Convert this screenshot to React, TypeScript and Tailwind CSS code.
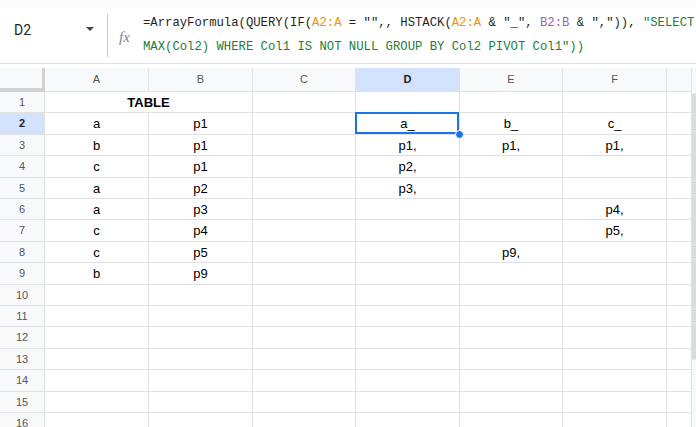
import React from "react";

const colW = ["w-[104px]", "w-[104px]", "w-[103px]", "w-[104px]", "w-[103px]", "w-[104px]", "w-[25px]"];
const rowH = [
  "h-[21px]", "h-[22px]", "h-[21px]", "h-[22px]", "h-[21px]", "h-[21px]", "h-[22px]", "h-[21px]",
  "h-[22px]", "h-[21px]", "h-[21px]", "h-[22px]", "h-[21px]", "h-[22px]", "h-[21px]", "h-[22px]",
];

const data: Record<number, string[]> = {
  2: ["a", "p1", "", "a_", "b_", "c_", ""],
  3: ["b", "p1", "", "p1,", "p1,", "p1,", ""],
  4: ["c", "p1", "", "p2,", "", "", ""],
  5: ["a", "p2", "", "p3,", "", "", ""],
  6: ["a", "p3", "", "", "", "p4,", ""],
  7: ["c", "p4", "", "", "", "p5,", ""],
  8: ["c", "p5", "", "", "p9,", "", ""],
  9: ["b", "p9", "", "", "", "", ""],
};

const letters = ["A", "B", "C", "D", "E", "F", ""];

function Formula() {
  return (
    <div className="text-[12.25px] leading-[24px] text-[#1f1f1f] whitespace-pre" style={{ fontFamily: '"Liberation Mono", "DejaVu Sans Mono", monospace' }}>
      <div>
        {"=ArrayFormula(QUERY(IF("}
        <span className="text-[#f09300]">A2:A</span>
        {' = "",, HSTACK('}
        <span className="text-[#f09300]">A2:A</span>
        {' & "_", '}
        <span className="text-[#a15bcc]">B2:B</span>
        {' & ",")), '}
        <span className="text-[#188038]">"SELECT</span>
      </div>
      <div className="text-[#188038]">{'MAX(Col2) WHERE Col1 IS NOT NULL GROUP BY Col2 PIVOT Col1"))'}</div>
    </div>
  );
}

export default function App() {
  return (
    <div className="w-[696px] h-[427px] overflow-hidden bg-white" style={{ fontFamily: '"Liberation Sans", Arial, sans-serif' }}>
      <div className="h-[8px] bg-[#f9fbfd]" />
      <div className="h-[56px] flex border-b border-[#e3e3e3]">
        <div className="w-[108px] flex items-start justify-between pt-[8px] pl-[14px] pr-[13px] border-r border-[#c4c7c5] my-[6px]">
          <span className="text-[14px] leading-[16px] text-[#1f1f1f]" style={{ fontFamily: "Roboto, sans-serif" }}>D2</span>
          <svg width="8" height="4" viewBox="0 0 8 4" className="mt-[5px]"><path d="M0 0h8L4 4z" fill="#444746" /></svg>
        </div>
        <div className="w-[35px] flex items-center justify-start pl-[11px] pt-[4px]">
          <span className="text-[15px] italic text-[#80868b]" style={{ fontFamily: '"Liberation Serif", serif' }}>fx</span>
        </div>
        <div className="pt-[3px]">
          <Formula />
        </div>
      </div>
      <div className="h-[4px]" />
      <div className="flex h-[24px]">
        <div className="w-[45px] bg-[#f8f9fa] border-r-[3px] border-b-[4px] border-[#d2d2d2]" />
        {letters.map((l, i) => (
          <div
            key={i}
            className={`${colW[i]} flex items-center justify-center border-r border-b border-[#e1e1e1] text-[11px] ${
              l === "D" ? "bg-[#d3e3fd] font-bold text-[#1f1f1f]" : "bg-[#f8f9fa] text-[#575757]"
            }`}
          >
            {l}
          </div>
        ))}
        <div className="w-[4px] bg-[#f8f9fa]" />
      </div>
      <div className="flex">
        <div className="flex flex-col">
          {rowH.map((h, r) => {
            const n = r + 1;
            const sel = n === 2;
            return (
              <div key={n} className={`flex ${h}`}>
                <div
                  className={`w-[45px] flex items-center justify-center border-r border-b border-[#e1e1e1] text-[11px] ${
                    sel ? "bg-[#d3e3fd] font-bold text-[#1f1f1f]" : "bg-[#f8f9fa] text-[#575757]"
                  }`}
                >
                  {n}
                </div>
                {n === 1 ? (
                  <>
                    <div className="w-[208px] flex items-center justify-center pt-[2px] border-r border-b border-[#e1e1e1] text-[13px] font-bold text-black">
                      TABLE
                    </div>
                    {[2, 3, 4, 5, 6].map((c) => (
                      <div key={c} className={`${colW[c]} border-r border-b border-[#e1e1e1]`} />
                    ))}
                  </>
                ) : (
                  colW.map((w, c) => {
                    const v = data[n]?.[c] ?? "";
                    const active = n === 2 && c === 3;
                    return (
                      <div
                        key={c}
                        className={`${w} relative flex items-center justify-center pt-[1px] border-r border-b border-[#e1e1e1] text-[13px] text-black`}
                      >
                        {v}
                        {active && (
                          <>
                            <div className="absolute -left-[1px] -top-[1px] right-0 bottom-0 border-2 border-[#1a73e8]" />
                            <div className="absolute -right-[5px] -bottom-[5px] w-[9px] h-[9px] rounded-full bg-[#1a73e8] border border-white z-10" />
                          </>
                        )}
                      </div>
                    );
                  })
                )}
              </div>
            );
          })}
        </div>
        <div className="w-[4px] relative bg-[#f8f9fa]">
          <div className="absolute left-0 top-[1px] w-[4px] h-[267px] rounded-[2px] bg-[#dadce0]" />
        </div>
      </div>
    </div>
  );
}
